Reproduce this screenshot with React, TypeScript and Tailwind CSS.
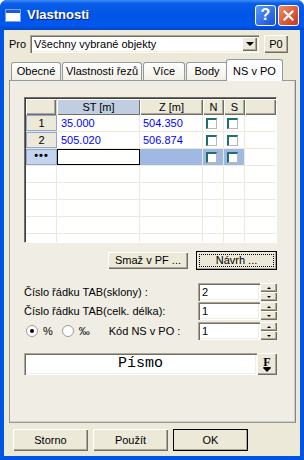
import React from "react";

const font = "font-['Liberation_Sans',Arial,sans-serif]";
const raised =
  "bg-[#ECE9D8] shadow-[inset_1px_1px_0_#ffffff,inset_-1px_-1px_0_#716F64,inset_-2px_-2px_0_#ACA899]";
const sunken =
  "bg-white shadow-[inset_1px_1px_0_#ACA899,inset_2px_2px_0_#716F64,inset_-1px_-1px_0_#ffffff,inset_-2px_-2px_0_#F1EFE2]";

const Btn = ({ label, w, def, focus }: { label: string; w: string; def?: boolean; focus?: boolean }) => (
  <div
    className={`${w} h-full flex items-center justify-center ${raised} ${def ? "outline outline-1 outline-black -outline-offset-1" : ""} relative whitespace-nowrap`}
  >
    {focus && <div className="absolute inset-[3px] border border-dotted border-black" />}
    <span className="relative">{label}</span>
  </div>
);

const Check = () => (
  <div className="w-[11px] h-[11px] bg-white border-t-2 border-l-2 border-t-[#1F6F6E] border-l-[#1F6F6E] border-r border-b border-r-[#B8B8B8] border-b-[#B8B8B8]" />
);

const Spin = ({ value }: { value: string }) => (
  <div className="flex h-[18px]">
    <div className={`w-[62px] h-full ${sunken} pl-[4px] flex items-center`}>{value}</div>
    <div className="w-[17px] flex flex-col">
      <div className={`h-[9px] ${raised} flex items-center justify-center`}>
        <div className="w-0 h-0 border-x-[2px] border-x-transparent border-b-[2px] border-b-black" />
      </div>
      <div className={`h-[9px] ${raised} flex items-center justify-center`}>
        <div className="w-0 h-0 border-x-[2px] border-x-transparent border-t-[2px] border-t-black" />
      </div>
    </div>
  </div>
);

const rows: { h: string; st: string; z: string }[] = [
  { h: "1", st: "35.000", z: "504.350" },
  { h: "2", st: "505.020", z: "506.874" },
];

const Grid = () => (
  <div className="w-[253px] h-[146px] border-t border-l border-t-[#716F64] border-l-[#716F64] border-r border-b border-r-white border-b-white shadow-[inset_1px_1px_0_#404040] pl-px pt-px bg-white overflow-hidden">
    <div className="flex h-[16px] text-center">
      <div className={`w-[31px] ${raised} border-r border-[#D8D4C4]`} />
      <div className="w-[83px] bg-[#C1CDE0] shadow-[inset_1px_1px_0_#ffffff,inset_-1px_-1px_0_#716F64] flex items-center justify-center">ST [m]</div>
      <div className={`w-[63px] ${raised} flex items-center justify-center`}>Z [m]</div>
      <div className={`w-[21px] ${raised} flex items-center justify-center`}>N</div>
      <div className={`w-[21px] ${raised} flex items-center justify-center`}>S</div>
      <div className={`flex-1 ${raised}`} />
    </div>
    {rows.map((r) => (
      <div key={r.h} className="flex h-[17px] border-b border-[#ECE9D8]">
        <div className="w-[31px] bg-[#ECE9D8] border border-[#8FA6D8] flex items-center justify-center">{r.h}</div>
        <div className="w-[83px] border-r border-[#ECE9D8] text-[#0000FF] pl-[4px] flex items-center">{r.st}</div>
        <div className="w-[63px] border-r border-[#ECE9D8] text-[#0000FF] pl-[3px] flex items-center">{r.z}</div>
        <div className="w-[21px] border-r border-[#ECE9D8] pl-[3px] flex items-center"><Check /></div>
        <div className="w-[21px] border-r border-[#ECE9D8] pl-[3px] flex items-center"><Check /></div>
        <div className="flex-1" />
      </div>
    ))}
    <div className="flex h-[17px] border-b border-[#ECE9D8]">
      <div className="w-[31px] bg-[#C4D3EE] border border-[#8FA6D8] flex items-center justify-center font-bold leading-none pb-[3px] tracking-[1px]">•••</div>
      <div className="w-[83px] border border-black bg-white" />
      <div className="w-[63px] bg-[#A0B8E4] border-r border-[#ECE9D8]" />
      <div className="w-[21px] bg-[#A0B8E4] border-r border-[#ECE9D8] pl-[3px] flex items-center"><Check /></div>
      <div className="w-[21px] bg-[#A0B8E4] border-r border-[#ECE9D8] pl-[3px] flex items-center"><Check /></div>
      <div className="flex-1" />
    </div>
    {[0, 1, 2, 3, 4].map((i) => (
      <div key={i} className="flex h-[17px] border-b border-[#ECE9D8]">
        <div className="w-[31px] border-r border-[#ECE9D8]" />
        <div className="w-[83px] border-r border-[#ECE9D8]" />
        <div className="w-[63px] border-r border-[#ECE9D8]" />
        <div className="w-[21px] border-r border-[#ECE9D8]" />
        <div className="w-[21px] border-r border-[#ECE9D8]" />
        <div className="flex-1" />
      </div>
    ))}
  </div>
);

const tabs = [
  { label: "Obecné", w: "w-[50px]" },
  { label: "Vlastnosti řezů", w: "w-[80px]" },
  { label: "Více", w: "w-[42px]" },
  { label: "Body", w: "w-[42px]" },
];

export default function App() {
  return (
    <div className={`w-[304px] h-[460px] bg-[#0054E3] rounded-t-[7px] flex flex-col text-[11px] text-black ${font}`}>
      {/* title bar */}
      <div className="h-[30px] rounded-t-[7px] bg-[linear-gradient(to_bottom,#3C8CF8_0%,#0A5DE8_12%,#0055E6_50%,#0058EE_85%,#0043C8_100%)] flex items-center pl-[5px] pr-[5px]">
        <div className="w-[16px] h-[13px] bg-white border border-[#7BA2E7] flex flex-col">
          <div className="h-[3px] bg-[#1E5BD8]" />
        </div>
        <span className="ml-[6px] text-white font-bold text-[13px] [text-shadow:1px_1px_0_#0A1E7A]">Vlastnosti</span>
        <div className="ml-auto w-[21px] h-[21px] rounded-[3px] border border-white bg-[linear-gradient(135deg,#5C9AF7,#1450D8)] flex items-center justify-center text-white font-bold text-[16px] leading-none">?</div>
        <div className="ml-[2px] w-[21px] h-[21px] rounded-[3px] border border-white bg-[linear-gradient(135deg,#F08A66,#C9371A)] flex items-center justify-center">
          <svg width="11" height="11" viewBox="0 0 11 11">
            <path d="M1.5 1.5 L9.5 9.5 M9.5 1.5 L1.5 9.5" stroke="white" strokeWidth="2.2" strokeLinecap="square" />
          </svg>
        </div>
      </div>

      {/* client */}
      <div className="flex-1 mx-[4px] mb-[4px] bg-[#ECE9D8] pt-[5px] pl-[5px] pr-[4px] flex flex-col">
        <div className="flex items-center h-[18px]">
          <span className="w-[21px]">Pro</span>
          <div className={`w-[229px] h-full ${sunken} flex items-center pl-[4px] pr-[2px]`}>
            <span className="flex-1">Všechny vybrané objekty</span>
            <div className={`w-[15px] h-[14px] ${raised} flex items-center justify-center`}>
              <div className="w-0 h-0 border-x-[4px] border-x-transparent border-t-[4px] border-t-black" />
            </div>
          </div>
          <div className="ml-[5px] w-[24px] h-full">
            <Btn label="P0" w="w-[24px]" />
          </div>
        </div>

        {/* tabs */}
        <div className="mt-[6px] h-[21px] flex items-end pl-[2px] relative z-10">
          {tabs.map((t) => (
            <div
              key={t.label}
              className={`${t.w} h-[18px] mr-px bg-[linear-gradient(to_bottom,#FFFFFF,#F1EFE6)] border border-b-0 border-[#919B9C] rounded-t-[3px] flex items-center justify-center whitespace-nowrap`}
            >
              {t.label}
            </div>
          ))}
          <div className="-ml-[3px] w-[57px] h-[22px] -mb-px bg-[#FCFCFE] border border-b-0 border-[#919B9C] rounded-t-[3px] flex items-start pt-[3px] justify-center whitespace-nowrap">
            NS v PO
          </div>
        </div>

        <div className="h-[343px] border border-[#919B9C] border-r-[#7F8687] shadow-[inset_-1px_-1px_0_#D0CEBF] bg-[#F0EEE4] pt-[16px] pl-[14px] flex flex-col">
          <Grid />
          <div className="mt-[8px] h-[19px] flex w-[253px] justify-end">
            <div className="h-[17px] mt-px">
              <Btn label="Smaž v PF ..." w="w-[80px]" />
            </div>
            <div className="ml-[8px] h-[19px]">
              <Btn label="Návrh ..." w="w-[81px]" def focus />
            </div>
          </div>

          <div className="mt-[13px] flex flex-col w-[253px] gap-[1px]">
            <div className="flex items-center justify-between h-[18px]">
              <span>Číslo řádku TAB(sklony) :</span>
              <Spin value="2" />
            </div>
            <div className="flex items-center justify-between h-[18px]">
              <span>Číslo řádku TAB(celk. délka):</span>
              <Spin value="1" />
            </div>
            <div className="flex items-center h-[18px] mt-px">
              <div className="ml-[2px] w-[12px] h-[12px] rounded-full bg-white border border-[#9B9B9B] flex items-center justify-center">
                <div className="w-[4px] h-[4px] rounded-full bg-black" />
              </div>
              <span className="ml-[5px]">%</span>
              <div className="ml-[9px] w-[12px] h-[12px] rounded-full bg-white border border-[#9B9B9B]" />
              <span className="ml-[5px]">‰</span>
              <span className="ml-[19px]">Kód NS v PO :</span>
              <div className="ml-auto">
                <Spin value="1" />
              </div>
            </div>
          </div>

          <div className="mt-[13px] flex w-[253px] h-[22px]">
            <div className={`flex-1 ${sunken} flex items-center justify-center font-['Liberation_Mono',monospace] text-[15px]`}>
              Písmo
            </div>
            <div className={`w-[20px] ${raised} flex flex-col items-center justify-center`}>
              <span className="font-['Liberation_Serif',serif] font-bold text-[12px] leading-[10px] underline">F</span>
              <div className="mt-[1px] w-0 h-0 border-x-[4px] border-x-transparent border-t-[4px] border-t-black" />
            </div>
          </div>
        </div>

        <div className="mt-[6px] h-[22px] flex pl-[4px] gap-[5px]">
          <Btn label="Storno" w="w-[75px]" />
          <Btn label="Použít" w="w-[75px]" />
          <Btn label="OK" w="w-[75px]" def />
        </div>
      </div>
    </div>
  );
}
